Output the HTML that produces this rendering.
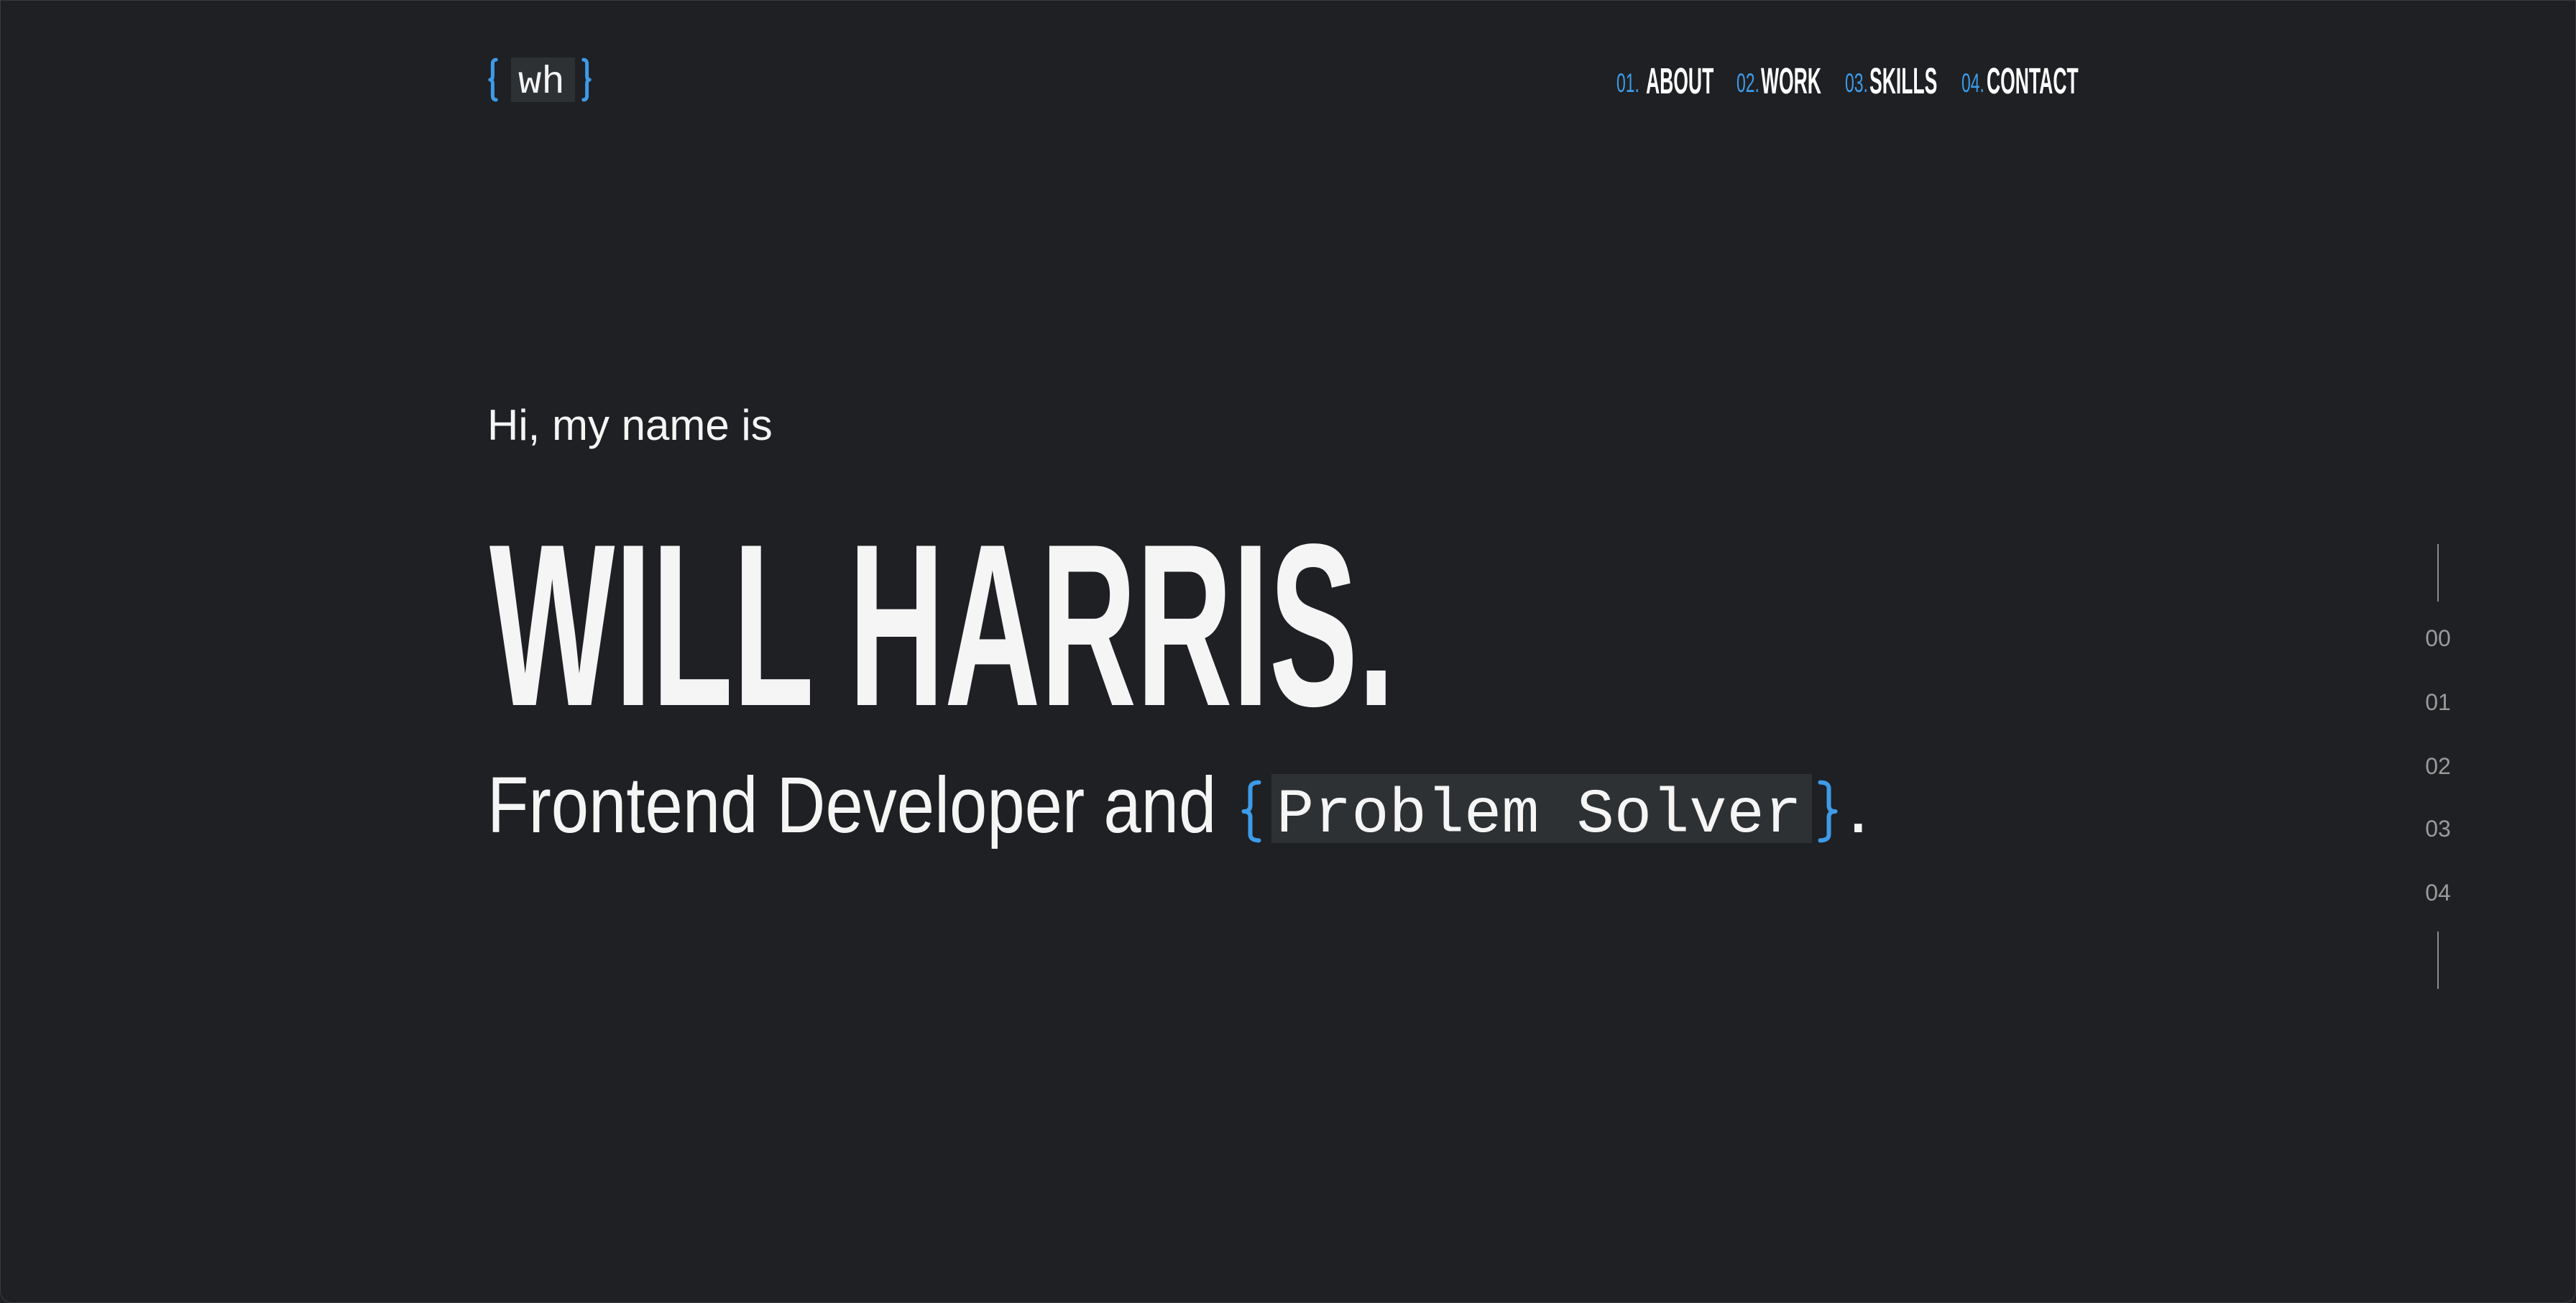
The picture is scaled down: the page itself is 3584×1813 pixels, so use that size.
<!DOCTYPE html>
<html><head><meta charset="utf-8">
<style>
html,body{margin:0;padding:0;}
body{width:3584px;height:1813px;background:#1f2023;position:relative;overflow:hidden;font-family:"Liberation Sans",sans-serif;}
.frame{position:absolute;left:0;top:0;width:3582px;height:1811px;border:1px solid #3a3b3e;border-radius:0 0 16px 16px;}
.a{position:absolute;white-space:nowrap;line-height:1;}
.w{color:#f5f5f5;}
.nav{font-weight:bold;font-size:51px;top:87px;color:#fff;transform:scaleX(0.52);transform-origin:0 0;}
.num{font-size:37px;top:97px;color:#3d9be9;transform:scaleX(0.62);transform-origin:0 0;}
.side{font-size:32px;color:#9a9a9a;left:3352px;width:80px;text-align:center;}
.line{position:absolute;left:3391px;width:2px;height:80px;background:#8a8a8a;}
svg.br{position:absolute;overflow:visible;}
svg.br path{fill:none;stroke:#3d9be9;stroke-linecap:round;stroke-linejoin:round;}
</style></head><body>
<div class="frame"></div>

<!-- logo -->
<svg class="br" style="left:680px;top:82px" width="12" height="58" viewBox="0 0 20 100" preserveAspectRatio="none"><path stroke-width="5" vector-effect="non-scaling-stroke" d="M17 2 Q9 2 9 12 L9 40 Q9 50 3 50 Q9 50 9 60 L9 88 Q9 98 17 98"/></svg>
<div style="position:absolute;left:711px;top:80px;width:89px;height:62px;background:#2e3134;"></div>
<div class="a w" style="left:721px;top:89px;font-family:'Liberation Mono',monospace;font-size:54px;">wh</div>
<svg class="br" style="left:810px;top:82px" width="12" height="58" viewBox="0 0 20 100" preserveAspectRatio="none"><path stroke-width="5" vector-effect="non-scaling-stroke" d="M3 2 Q11 2 11 12 L11 40 Q11 50 17 50 Q11 50 11 60 L11 88 Q11 98 3 98"/></svg>

<!-- nav -->
<div class="a num" style="left:2249px;">01.</div>
<div class="a nav" style="left:2290px;">ABOUT</div>
<div class="a num" style="left:2416px;">02.</div>
<div class="a nav" style="left:2450px;">WORK</div>
<div class="a num" style="left:2567px;">03.</div>
<div class="a nav" style="left:2601px;">SKILLS</div>
<div class="a num" style="left:2729px;">04.</div>
<div class="a nav" style="left:2764px;">CONTACT</div>

<!-- hero -->
<div class="a w" style="left:678px;top:562px;font-size:60px;">Hi, my name is</div>
<div class="a w" style="left:681px;top:710px;font-size:322px;font-weight:bold;transform:scaleX(0.574);transform-origin:0 0;">WILL HARRIS.</div>

<div class="a w" style="left:678px;top:1066px;font-size:110px;transform:scaleX(0.855);transform-origin:0 0;">Frontend Developer and</div>
<svg class="br" style="left:1726px;top:1087px" width="30" height="84" viewBox="0 0 20 100" preserveAspectRatio="none"><path stroke-width="6" vector-effect="non-scaling-stroke" d="M17 2 Q9 2 9 12 L9 40 Q9 50 3 50 Q9 50 9 60 L9 88 Q9 98 17 98"/></svg>
<div style="position:absolute;left:1769px;top:1077px;width:752px;height:96px;background:#2e3134;"></div>
<div class="a w" style="left:1776px;top:1092px;font-family:'Liberation Mono',monospace;font-size:87px;">Problem Solver</div>
<svg class="br" style="left:2528px;top:1087px" width="30" height="84" viewBox="0 0 20 100" preserveAspectRatio="none"><path stroke-width="6" vector-effect="non-scaling-stroke" d="M3 2 Q11 2 11 12 L11 40 Q11 50 17 50 Q11 50 11 60 L11 88 Q11 98 3 98"/></svg>
<div class="a w" style="left:2570px;top:1066px;font-size:110px;">.</div>

<!-- side nav -->
<div class="line" style="top:757px;"></div>
<div class="a side" style="top:872px;">00</div>
<div class="a side" style="top:961px;">01</div>
<div class="a side" style="top:1050px;">02</div>
<div class="a side" style="top:1137px;">03</div>
<div class="a side" style="top:1226px;">04</div>
<div class="line" style="top:1296px;"></div>
</body></html>
